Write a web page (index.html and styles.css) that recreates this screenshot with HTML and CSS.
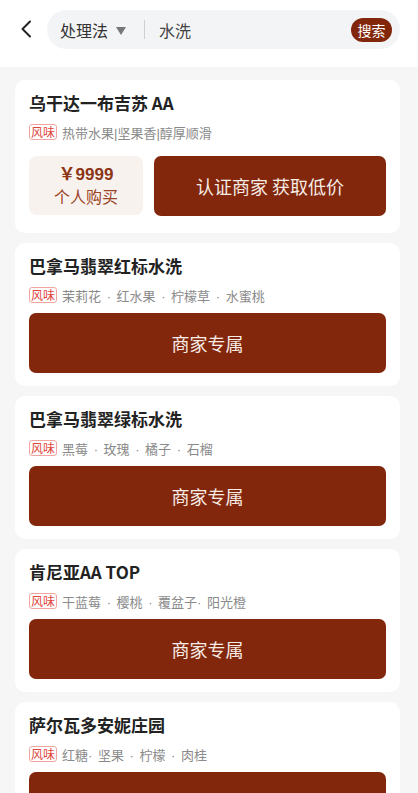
FILE: index.html
```html
<!DOCTYPE html>
<html lang="zh">
<head>
<meta charset="utf-8">
<link rel="stylesheet" href="styles.css">
</head>
<body>
<div class="page">
  <header class="header">
    <svg class="back" width="14" height="18" viewBox="0 0 14 18"><path d="M11 1.5 L3.5 9 L11 16.5" fill="none" stroke="#222" stroke-width="2" stroke-linecap="round" stroke-linejoin="round"/></svg>
    <div class="search">
      <span class="filter">处理法</span>
      <span class="tri"></span>
      <span class="divider"></span>
      <span class="query">水洗</span>
      <span class="search-btn">搜索</span>
    </div>
  </header>
  <main class="list">
    <section class="card card-first">
      <h2 class="title">乌干达一布吉苏 AA</h2>
      <div class="flavor"><span class="tag">风味</span><span class="notes">热带水果|坚果香|醇厚顺滑</span></div>
      <div class="actions">
        <div class="price"><span class="amount">￥9999</span><span class="buy">个人购买</span></div>
        <div class="btn btn-wide">认证商家 获取低价</div>
      </div>
    </section>
    <section class="card">
      <h2 class="title">巴拿马翡翠红标水洗</h2>
      <div class="flavor"><span class="tag">风味</span><span class="notes">茉莉花 · 红水果 · 柠檬草 · 水蜜桃</span></div>
      <div class="btn btn-full">商家专属</div>
    </section>
    <section class="card">
      <h2 class="title">巴拿马翡翠绿标水洗</h2>
      <div class="flavor"><span class="tag">风味</span><span class="notes">黑莓 · 玫瑰 · 橘子 · 石榴</span></div>
      <div class="btn btn-full">商家专属</div>
    </section>
    <section class="card">
      <h2 class="title">肯尼亚AA TOP</h2>
      <div class="flavor"><span class="tag">风味</span><span class="notes">干蓝莓 · 樱桃 · 覆盆子· 阳光橙</span></div>
      <div class="btn btn-full">商家专属</div>
    </section>
    <section class="card">
      <h2 class="title">萨尔瓦多安妮庄园</h2>
      <div class="flavor"><span class="tag">风味</span><span class="notes">红糖· 坚果 · 柠檬 · 肉桂</span></div>
      <div class="btn btn-full">商家专属</div>
    </section>
  </main>
</div>
</body>
</html>
```

FILE: styles.css
```css
html, body {
  margin: 0;
  padding: 0;
}
body {
  font-family: "Noto Sans CJK SC", "Noto Sans", sans-serif;
  background: #f6f6f6;
  color: #222;
}
.page {
  height: 793px;
  overflow: hidden;
}
.header {
  height: 67px;
  background: #fff;
  display: flex;
  align-items: center;
  padding: 0 18px 0 19px;
  box-sizing: border-box;
  gap: 14px;
}
.back {
  flex: none;
  margin-top: -9px;
}
.search {
  flex: 1;
  height: 39px;
  margin-top: -8px;
  border-radius: 20px;
  background: #f3f4f6;
  display: flex;
  align-items: center;
  padding: 0 8px 0 13px;
}
.filter {
  font-size: 16px;
  color: #333;
  line-height: 20px;
}
.tri {
  width: 0;
  height: 0;
  border-left: 5.5px solid transparent;
  border-right: 5.5px solid transparent;
  border-top: 8px solid #777;
  margin: 3px 0 0 8px;
}
.divider {
  width: 1px;
  height: 19px;
  background: #cfcfd2;
  margin-left: 18px;
}
.query {
  font-size: 16px;
  color: #444;
  margin-left: 14px;
  flex: 1;
}
.search-btn {
  width: 41px;
  height: 24px;
  border-radius: 12px;
  background: #82270b;
  color: #fff;
  font-size: 14px;
  line-height: 24px;
  text-align: center;
}
.list {
  padding: 13px 18px 0 15px;
  display: flex;
  flex-direction: column;
  gap: 10px;
}
.card {
  background: #fff;
  border-radius: 10px;
  padding: 11px 14px 13px 14px;
}
.card-first {
  padding-bottom: 17px;
}
.title {
  margin: 0;
  font-size: 17px;
  font-weight: 600;
  line-height: 24px;
  color: #222;
}
.flavor {
  display: flex;
  align-items: center;
  height: 20px;
  margin-top: 7px;
}
.tag {
  font-size: 12px;
  line-height: 14px;
  color: #e0463c;
  border: 1px solid #f2a59e;
  border-radius: 3px;
  padding: 0 1px;
  margin-right: 5px;
}
.notes {
  font-family: "Liberation Sans", "Noto Sans CJK SC", sans-serif;
  font-size: 13px;
  word-spacing: 2px;
  color: #8a8a8a;
}
.actions {
  display: flex;
  gap: 11px;
  margin-top: 14px;
}
.price {
  width: 114px;
  height: 59px;
  background: #f8f2ef;
  border-radius: 8px;
  display: flex;
  flex-direction: column;
  align-items: center;
  justify-content: center;
  color: #8c3516;
}
.amount {
  font-family: "Liberation Sans", "Noto Sans CJK SC", sans-serif;
  font-size: 17px;
  font-weight: 700;
  line-height: 20px;
}
.buy {
  font-size: 16px;
  line-height: 22px;
  color: #9b4424;
}
.btn {
  background: #82270b;
  color: #f6ece6;
  border-radius: 7px;
  display: flex;
  align-items: center;
  justify-content: center;
  font-size: 18px;
}
.btn-wide {
  flex: 1;
  height: 60px;
}
.btn-full {
  height: 60px;
  margin-top: 8px;
}
```
